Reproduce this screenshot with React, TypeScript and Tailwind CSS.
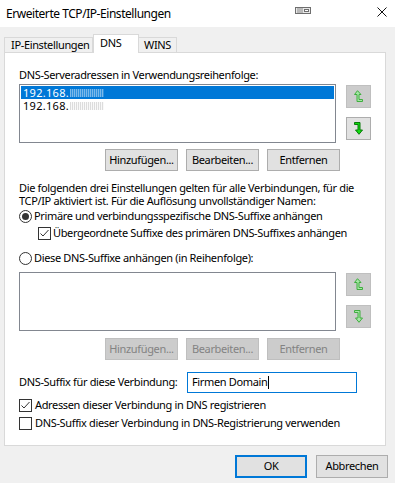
import type { ReactNode } from "react";

function ArrowUp({ disabled }: { disabled?: boolean }) {
  return (
    <svg width="9" height="13" viewBox="0 0 9 13">
      <path
        d="M3.5 0.7 L7 4.5 L5 4.5 L5 9.5 L8.5 9.5 L8.5 11.5 L3 11.5 L3 4.5 L0.5 4.5 Z"
        fill={disabled ? "#a6e6a6" : "#2ee02e"}
        stroke={disabled ? "#3fae3f" : "#0a7a0a"}
        strokeWidth="1"
        strokeLinejoin="miter"
      />
    </svg>
  );
}

function ArrowDown({ disabled }: { disabled?: boolean }) {
  return (
    <svg width="9" height="13" viewBox="0 0 9 13">
      <path
        d="M0.5 0.5 L6 0.5 L6 8 L8.5 8 L5 12.3 L1.5 8 L4 8 L4 2.5 L0.5 2.5 Z"
        fill={disabled ? "#a6e6a6" : "#11dd11"}
        stroke={disabled ? "#3fae3f" : "#0a7a0a"}
        strokeWidth="1"
      />
    </svg>
  );
}

function Btn({ children, disabled }: { children: ReactNode; disabled?: boolean }) {
  return (
    <div
      className={
        "w-[73px] h-[22px] flex items-center justify-center border whitespace-nowrap " +
        (disabled
          ? "bg-[#cccccc] border-[#bfbfbf] text-[#838383]"
          : "bg-[#e1e1e1] border-[#adadad] text-black")
      }
    >
      {children}
    </div>
  );
}

function MoveButtons({ disabled }: { disabled?: boolean }) {
  return (
    <div className="flex flex-col pt-px ml-[10px]">
      <div className="w-[25px] h-[23px] flex items-center justify-center border bg-[#cccccc] border-[#bfbfbf]">
        <ArrowUp disabled />
      </div>
      <div
        className={
          "mt-[9px] w-[25px] h-[23px] flex items-center justify-center border " +
          (disabled ? "bg-[#cccccc] border-[#bfbfbf]" : "bg-[#e1e1e1] border-[#adadad]")
        }
      >
        <ArrowDown disabled={disabled} />
      </div>
    </div>
  );
}

function Radio({ checked }: { checked?: boolean }) {
  return (
    <div className="w-[13px] h-[13px] rounded-full border border-[#333333] bg-white flex items-center justify-center shrink-0">
      {checked && <div className="w-[7px] h-[7px] rounded-full bg-[#333333]" />}
    </div>
  );
}

function Check({ checked }: { checked?: boolean }) {
  return (
    <div className="w-[13px] h-[13px] border border-[#333333] bg-white flex items-center justify-center shrink-0">
      {checked && (
        <svg width="11" height="11" viewBox="0 0 11 11">
          <path d="M1.5 5.5 L4 8 L9.5 2" fill="none" stroke="#333333" strokeWidth="1" />
        </svg>
      )}
    </div>
  );
}

// blurred part of the address
function Blur({ light }: { light?: boolean }) {
  return (
    <span
      className={
        "inline-block w-[34px] h-[8px] ml-[1px] " +
        (light
          ? "opacity-60 bg-[repeating-linear-gradient(90deg,rgba(255,255,255,0.8)_0px,rgba(255,255,255,0.8)_1px,rgba(255,255,255,0.3)_1px,rgba(255,255,255,0.3)_2px)]"
          : "opacity-60 bg-[repeating-linear-gradient(90deg,rgba(140,140,140,0.5)_0px,rgba(140,140,140,0.5)_1px,rgba(220,220,220,0.3)_1px,rgba(220,220,220,0.3)_2px)]")
      }
    />
  );
}

export default function App() {
  return (
    <div className="w-[395px] h-[483px] bg-[#f0f0f0] flex flex-col text-[11px] tracking-[-0.35px] text-black font-['Noto_Sans',sans-serif] overflow-hidden whitespace-nowrap">
      {/* Title bar */}
      <div className="h-[27px] bg-white flex items-center pl-[6px] pr-[8px]">
        <span className="text-[12px] tracking-[-0.45px]">Erweiterte TCP/IP-Einstellungen</span>
        <div className="ml-auto mr-[66px] mt-[-6px]">
          <svg width="16" height="7" viewBox="0 0 16 7">
            <rect x="0.5" y="0.5" width="15" height="6" fill="#e8e8e8" stroke="#6e6e6e" />
            <path d="M3 1 V6 M5 1 V6 M7 1 V6" stroke="#8a8a8a" />
            <rect x="9.5" y="2.5" width="4" height="2" fill="#fff" stroke="#6e6e6e" />
          </svg>
        </div>
        <svg width="10" height="10" viewBox="0 0 10 10" className="mt-[-3px]">
          <path d="M0.5 0.5 L9.5 9.5 M9.5 0.5 L0.5 9.5" stroke="#111" strokeWidth="1" />
        </svg>
      </div>

      {/* Tabs */}
      <div className="mt-[7px] pl-1 flex items-end">
        <div className="h-[15px] pl-[6px] border border-b-0 border-[#d9d9d9] flex items-center w-[89px]">
          IP-Einstellungen
        </div>
        <div className="h-[19px] -mb-px relative z-10 bg-white border border-b-0 border-[#d9d9d9] flex items-start pl-[6px] w-[46px]">
          DNS
        </div>
        <div className="h-[15px] pl-[5px] border border-b-0 border-l-0 border-[#d9d9d9] flex items-center w-[38px]">
          WINS
        </div>
      </div>

      {/* Panel */}
      <div className="ml-1 w-[382px] h-[394px] bg-white border border-[#d9d9d9] px-[14px] flex flex-col">
        <div className="mt-[14px] h-[15px] leading-[15px]">DNS-Serveradressen in Verwendungsreihenfolge:</div>

        <div className="mt-[2px] flex">
          <div className="w-[321px] h-[59px] border border-[#828790] bg-white p-px flex flex-col tracking-[0.3px]">
            <div className="h-[13px] leading-[13px] bg-[#0078d7] text-white pl-[2px] flex items-center">
              192.168.
              <Blur light />
            </div>
            <div className="h-[13px] leading-[13px] pl-[2px] flex items-center">
              192.168.
              <Blur />
            </div>
          </div>
          <MoveButtons />
        </div>

        <div className="mt-[6px] w-[321px] flex justify-end gap-[8px]">
          <Btn>Hinzufügen...</Btn>
          <Btn>Bearbeiten...</Btn>
          <Btn>Entfernen</Btn>
        </div>

        <div className="mt-[10px] leading-[13px]">
          Die folgenden drei Einstellungen gelten für alle Verbindungen, für die
          <br />
          TCP/IP aktiviert ist. Für die Auflösung unvollständiger Namen:
        </div>

        <div className="mt-[3px] h-[13px] flex items-center gap-[2px]">
          <Radio checked />
          <span>Primäre und verbindungsspezifische DNS-Suffixe anhängen</span>
        </div>

        <div className="mt-[4px] h-[13px] pl-[19px] flex items-center gap-[2px]">
          <Check checked />
          <span>Übergeordnete Suffixe des primären DNS-Suffixes anhängen</span>
        </div>

        <div className="mt-[12px] h-[13px] flex items-center gap-[2px]">
          <Radio />
          <span>Diese DNS-Suffixe anhängen (in Reihenfolge):</span>
        </div>

        <div className="mt-[7px] flex">
          <div className="w-[321px] h-[59px] border border-[#828790] bg-white" />
          <MoveButtons disabled />
        </div>

        <div className="mt-[7px] w-[321px] flex justify-end gap-[8px]">
          <Btn disabled>Hinzufügen...</Btn>
          <Btn disabled>Bearbeiten...</Btn>
          <Btn disabled>Entfernen</Btn>
        </div>

        <div className="mt-[12px] h-[21px] flex items-center">
          <span className="w-[168px]">DNS-Suffix für diese Verbindung:</span>
          <div className="w-[170px] h-[21px] border border-[#0078d7] bg-white flex items-center pl-[4px]">
            <span>Firmen Domain</span>
            <span className="w-px h-[13px] bg-black ml-[1px]" />
          </div>
        </div>

        <div className="mt-[6px] h-[13px] flex items-center gap-[3px]">
          <Check checked />
          <span>Adressen dieser Verbindung in DNS registrieren</span>
        </div>

        <div className="mt-[5px] h-[13px] flex items-center gap-[3px]">
          <Check />
          <span>DNS-Suffix dieser Verbindung in DNS-Registrierung verwenden</span>
        </div>
      </div>

      {/* Dialog buttons */}
      <div className="mt-[9px] pr-[7px] flex justify-end gap-[9px]">
        <div className="w-[72px] h-[23px] border-2 border-[#0078d7] bg-[#e1e1e1] flex items-center justify-center">
          OK
        </div>
        <div className="w-[72px] h-[23px] border border-[#adadad] bg-[#e1e1e1] flex items-center justify-center">
          Abbrechen
        </div>
      </div>
    </div>
  );
}
